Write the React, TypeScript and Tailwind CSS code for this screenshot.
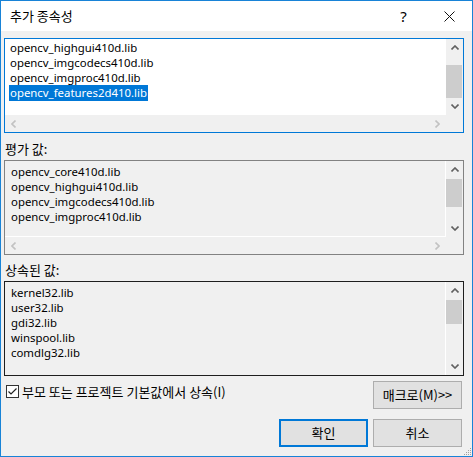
import React from 'react';

type Dir = 'up' | 'down' | 'left' | 'right';

const Chevron: React.FC<{ dir: Dir; color: string }> = ({ dir, color }) => {
  if (dir === 'up' || dir === 'down') {
    const pts = dir === 'up' ? '0.5,4.5 4,1 7.5,4.5' : '0.5,0.5 4,4 7.5,0.5';
    return (
      <svg width="8" height="5" viewBox="0 0 8 5">
        <polyline points={pts} fill="none" stroke={color} strokeWidth="1.6" />
      </svg>
    );
  }
  const pts = dir === 'left' ? '4.5,0.5 1,4 4.5,7.5' : '0.5,0.5 4,4 0.5,7.5';
  return (
    <svg width="5" height="8" viewBox="0 0 5 8">
      <polyline points={pts} fill="none" stroke={color} strokeWidth="1.6" />
    </svg>
  );
};

const VScroll: React.FC<{ thumb: string }> = ({ thumb }) => (
  <div className="flex w-[17px] flex-col bg-[#f0f0f0]">
    <div className="flex h-[17px] items-center justify-center">
      <Chevron dir="up" color="#606060" />
    </div>
    <div className="flex-1">
      <div className={`w-[16px] bg-[#cdcdcd] ${thumb}`} />
    </div>
    <div className="flex h-[17px] items-center justify-center">
      <Chevron dir="down" color="#606060" />
    </div>
  </div>
);

const HScroll: React.FC = () => (
  <div className="flex h-[17px] items-center justify-between bg-[#f0f0f0]">
    <div className="flex h-[17px] w-[17px] items-center justify-center">
      <Chevron dir="left" color="#c2c2c2" />
    </div>
    <div className="flex h-[17px] w-[17px] items-center justify-center">
      <Chevron dir="right" color="#c2c2c2" />
    </div>
  </div>
);

// list entries are latin only; the korean captions get their own larger size
const Row: React.FC<{ text: string; selected?: boolean }> = ({ text, selected }) => (
  <div className="h-[15px] text-[11.4px] leading-[15px]">
    <span className={selected ? 'bg-[#0078d7] px-[1px] pb-[1px] text-white' : 'px-[1px]'}>{text}</span>
  </div>
);

const KO = "font-['Noto_Sans_CJK_KR','Noto_Sans',sans-serif] text-[13px]";

export default function App() {
  const selected = ['opencv_highgui410d.lib', 'opencv_imgcodecs410d.lib', 'opencv_imgproc410d.lib'];
  const evaluated = ['opencv_core410d.lib', 'opencv_highgui410d.lib', 'opencv_imgcodecs410d.lib', 'opencv_imgproc410d.lib'];
  const inherited = ['kernel32.lib', 'user32.lib', 'gdi32.lib', 'winspool.lib', 'comdlg32.lib'];

  return (
    <div className="flex h-[457px] w-[473px] flex-col border border-[#1883d7] bg-[#f0f0f0] font-['Noto_Sans','Noto_Sans_CJK_KR',sans-serif] text-[12px] text-black">
      {/* title bar */}
      <div className="flex h-[30px] items-center bg-white">
        <div className={`flex-1 pl-[9px] ${KO}`}>추가 종속성</div>
        <div className="flex h-[30px] w-[45px] items-center justify-center text-[15px]">?</div>
        <div className="flex h-[30px] w-[46px] items-center justify-center">
          <svg width="11" height="11" viewBox="0 0 11 11">
            <path d="M0.5 0.5 L10.5 10.5 M10.5 0.5 L0.5 10.5" stroke="#111" strokeWidth="1" />
          </svg>
        </div>
      </div>

      <div className="flex flex-1 flex-col pl-[3px] pt-[7px]">
        {/* additional dependencies edit */}
        <div className="flex h-[95px] w-[460px] flex-col border border-[#0078d7]">
          <div className="flex flex-1">
            <div className="flex-1 bg-white pl-[4px] pt-[1px]">
              {selected.map((t) => (
                <Row key={t} text={t} />
              ))}
              <Row text="opencv_features2d410.lib" selected />
            </div>
            <VScroll thumb="mt-[9px] h-[33px]" />
          </div>
          <div className="flex">
            <div className="flex-1">
              <HScroll />
            </div>
            <div className="h-[17px] w-[17px] bg-[#f0f0f0]" />
          </div>
        </div>

        <div className={`h-[27px] pl-[1px] pt-[8px] leading-[15px] ${KO}`}>평가 값:</div>

        {/* evaluated value */}
        <div className="flex h-[95px] w-[460px] flex-col border border-[#828282]">
          <div className="flex flex-1">
            <div className="flex-1 border-b border-r border-white pl-[5px] pt-[3px]">
              {evaluated.map((t) => (
                <Row key={t} text={t} />
              ))}
            </div>
            <VScroll thumb="mt-[1px] h-[28px]" />
          </div>
          <div className="flex">
            <div className="flex-1">
              <HScroll />
            </div>
            <div className="h-[17px] w-[17px] bg-[#f0f0f0]" />
          </div>
        </div>

        <div className={`h-[26px] pl-[1px] pt-[7px] leading-[15px] ${KO}`}>상속된 값:</div>

        {/* inherited values */}
        <div className="flex h-[95px] w-[460px] border border-[#1e1e1e]">
          <div className="flex-1 border-r border-white pl-[5px] pt-[3px]">
            {inherited.map((t) => (
              <Row key={t} text={t} />
            ))}
          </div>
          <VScroll thumb="mt-[1px] h-[24px]" />
        </div>

        {/* inherit checkbox + macros */}
        <div className="flex h-[33px] justify-between pr-[10px] pt-[5px]">
          <div className="flex items-center gap-[3px] self-start pl-[2px] pt-[3px]">
            <div className="flex h-[13px] w-[13px] items-center justify-center border border-[#333] bg-white">
              <svg width="11" height="11" viewBox="0 0 11 11">
                <polyline points="1.5,5.5 4,8 9.5,2.5" fill="none" stroke="#222" strokeWidth="1.2" />
              </svg>
            </div>
            <span className={`leading-[15px] ${KO}`}>부모 또는 프로젝트 기본값에서 상속(I)</span>
          </div>
          <button className={`h-[28px] w-[89px] border border-[#adadad] bg-[#e1e1e1] ${KO}`}>매크로(M)&gt;&gt;</button>
        </div>

        {/* ok / cancel */}
        <div className="flex h-[38px] justify-end gap-[5px] pr-[10px] pt-[10px]">
          <button className={`h-[28px] w-[89px] border-2 border-[#0078d7] bg-[#e1e1e1] ${KO}`}>확인</button>
          <button className={`h-[28px] w-[89px] border border-[#adadad] bg-[#e1e1e1] ${KO}`}>취소</button>
        </div>

        {/* size grip */}
        <div className="flex h-[9px] items-end justify-end">
          <svg width="9" height="9" viewBox="0 0 9 9">
            <g fill="#a0a0a0">
              <rect x="7" y="1" width="1" height="1" />
              <rect x="5" y="3" width="1" height="1" />
              <rect x="7" y="3" width="1" height="1" />
              <rect x="3" y="5" width="1" height="1" />
              <rect x="5" y="5" width="1" height="1" />
              <rect x="7" y="5" width="1" height="1" />
              <rect x="1" y="7" width="1" height="1" />
              <rect x="3" y="7" width="1" height="1" />
              <rect x="5" y="7" width="1" height="1" />
              <rect x="7" y="7" width="1" height="1" />
            </g>
          </svg>
        </div>
      </div>
    </div>
  );
}
